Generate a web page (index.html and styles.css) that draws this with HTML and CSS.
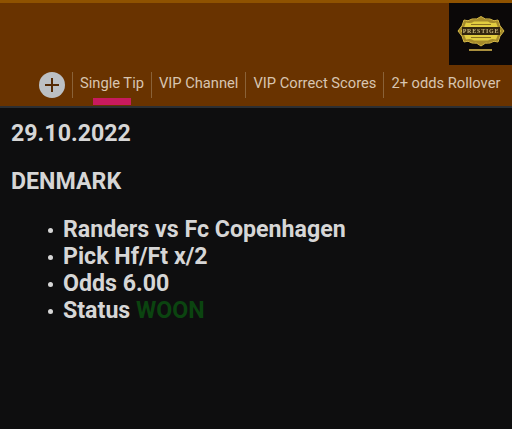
FILE: index.html
```html
<!DOCTYPE html>
<html lang="en">
<head>
<meta charset="utf-8">
<title>Single Tip</title>
<link rel="stylesheet" href="styles.css">
</head>
<body>
<header class="header">
  <div class="top">
    <div class="logo">
      <svg class="logo-art" width="48" height="36" viewBox="0 0 48 36" aria-hidden="true">
        <path d="M7 4 Q11 6 15 3 Q20 4 24 0.5 Q28 4 33 3 Q37 6 41 4 Q42 10 47 15 Q42 20 41 26 Q37 24 33 27 Q28 26 24 30 Q20 26 15 27 Q11 24 7 26 Q6 20 1 15 Q6 10 7 4Z" fill="#a58a2a" stroke="#d8bb48" stroke-width="1"/>
        <path d="M9 6.5 Q14 8 17 5.5 H31 Q34 8 39 6.5 Q40 11 44 15 Q40 19 39 23.5 Q34 22 31 24.5 H17 Q14 22 9 23.5 Q8 19 4 15 Q8 11 9 6.5Z" fill="#e2cc40"/>
        <path d="M14 8.5 H34 M14 21.5 H34" stroke="#8a7020" stroke-width="1"/>
        <rect x="5" y="11" width="38" height="8" fill="#33260f"/>
        <text class="logo-text" x="24" y="17.2" text-anchor="middle">PRESTIGE</text>
        <rect x="12" y="33" width="23" height="2" fill="#a98f3e"/>
      </svg>
    </div>
  </div>
  <nav class="tabs">
    <span class="add">
      <svg width="26" height="26" viewBox="0 0 26 26" aria-hidden="true">
        <circle cx="13" cy="13" r="13" fill="#bcc0c4"/>
        <path d="M13 6v14M6 13h14" stroke="#552a04" stroke-width="2"/>
      </svg>
    </span>
    <a class="tab active">Single Tip</a>
    <a class="tab">VIP Channel</a>
    <a class="tab">VIP Correct Scores</a>
    <a class="tab">2+ odds Rollover</a>
  </nav>
</header>
<main class="content">
  <h2 class="date">29.10.2022</h2>
  <h2 class="country">DENMARK</h2>
  <ul class="tips">
    <li>Randers vs Fc Copenhagen</li>
    <li>Pick Hf/Ft x/2</li>
    <li>Odds 6.00</li>
    <li>Status <span class="won">WOON</span></li>
  </ul>
</main>
</body>
</html>
```
FILE: styles.css
```css
* { box-sizing: border-box; }
html, body { margin: 0; height: 100%; }
body {
  background: #0e0e0f;
  font-family: Roboto, "Liberation Sans", sans-serif;
  overflow: hidden;
}
.header {
  height: 108px;
  background: #693300;
  border-top: 3px solid #8f5200;
  border-bottom: 2px solid #2c2f33;
  display: flex;
  flex-direction: column;
}
.top {
  height: 62px;
  display: flex;
  justify-content: flex-end;
}
.logo {
  width: 63px;
  height: 62px;
  background: #0b0808;
  display: flex;
  align-items: center;
  justify-content: center;
}
.logo-art { filter: blur(0.4px); }
.logo-text {
  font-family: "Liberation Serif", serif;
  font-size: 6px;
  font-weight: 700;
  letter-spacing: 0.8px;
  fill: #c8b67c;
}
.tabs {
  flex: 1;
  display: flex;
  align-items: flex-start;
  padding-left: 39px;
  white-space: nowrap;
}
.add { display: flex; margin-top: 7px; margin-right: 7px; }
.tab {
  position: relative;
  height: 26px;
  margin-top: 7px;
  padding: 0 7px;
  border-left: 1px solid #8a6238;
  color: #d8c5b0;
  font-size: 14.7px;
  line-height: 22px;
}
.tab.active::after {
  content: "";
  position: absolute;
  left: 20px;
  width: 38px;
  top: 26px;
  height: 7px;
  background: #c81a5e;
}
.content { padding: 0 11px; color: #d6d6d6; }
.date, .country {
  margin: 0;
  font-size: 23.2px;
  font-weight: 700;
  line-height: 26px;
}
.date { margin-top: 12px; }
.country { margin-top: 22px; }
.tips {
  list-style: none;
  margin: 22px 0 0;
  padding-left: 52px;
  font-size: 23.2px;
  font-weight: 700;
  line-height: 27px;
}
.tips li::before {
  content: "";
  display: inline-block;
  width: 5px;
  height: 5px;
  margin-left: -15px;
  margin-right: 10px;
  border-radius: 50%;
  background: #d6d6d6;
  vertical-align: 4px;
}
.won { color: #0b4410; }
```
